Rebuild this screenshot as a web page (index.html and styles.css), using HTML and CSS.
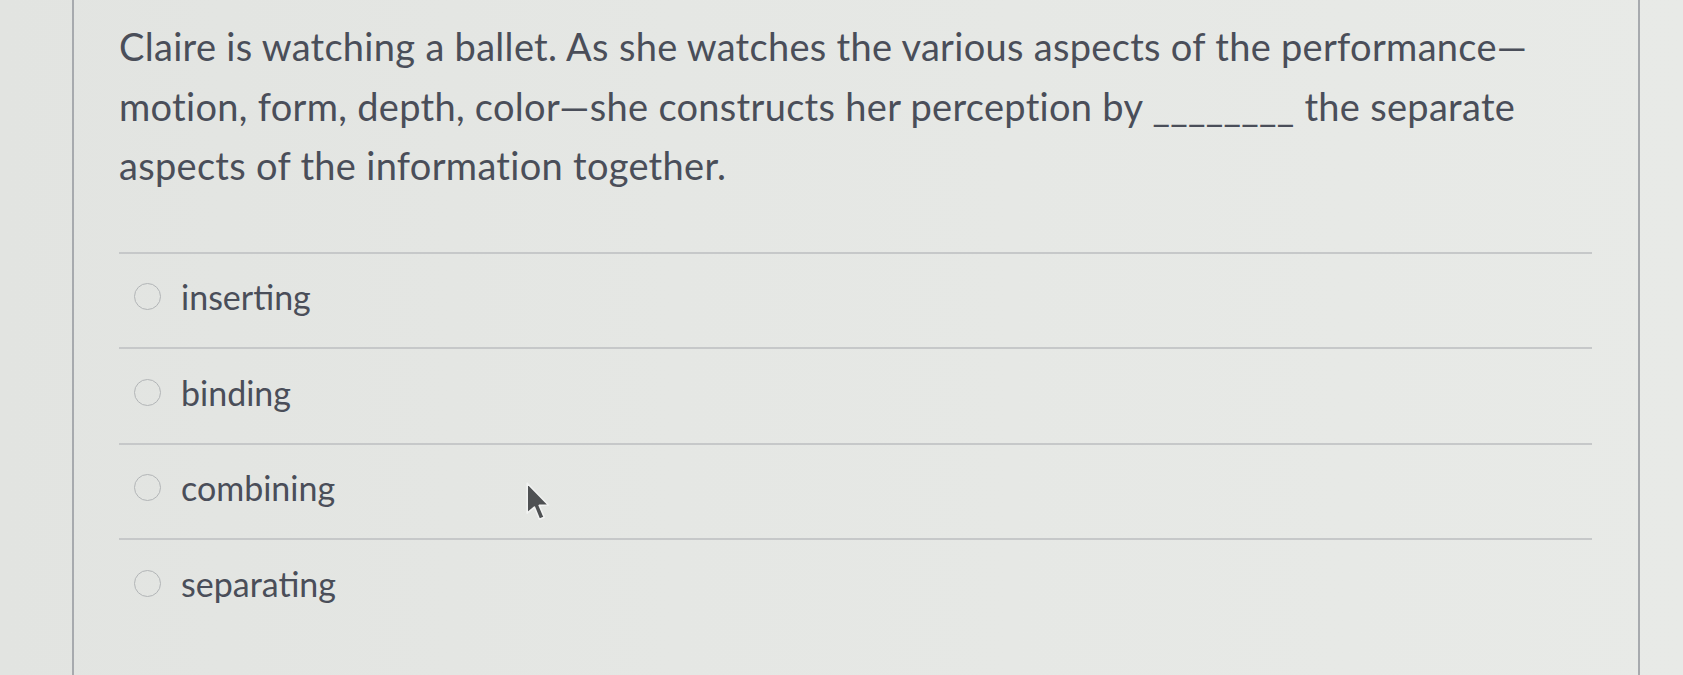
FILE: index.html
```html
<!DOCTYPE html>
<html lang="en">
<head>
<meta charset="utf-8">
<title>Quiz question</title>
<link rel="stylesheet" href="styles.css">
</head>
<body>
<div class="page">
  <div class="gutter"></div>
  <main class="panel">
    <div class="question">
      <p class="question-text">Claire is watching a ballet. As she watches the various aspects of the performance—motion, form, depth, color—she constructs her perception by ________ the separate aspects of the information together.</p>
    </div>
    <div class="answers">
      <label class="answer"><span class="radio"></span><span class="answer-text">inserting</span></label>
      <label class="answer"><span class="radio"></span><span class="answer-text">binding</span></label>
      <label class="answer"><span class="radio"></span><span class="answer-text">combining</span></label>
      <label class="answer"><span class="radio"></span><span class="answer-text">separating</span></label>
    </div>
  </main>
  <div class="gutter-right"></div>
  <svg class="cursor" width="24" height="40" viewBox="0 0 12 20" aria-hidden="true">
    <path d="M0.6 0.6 L0.6 15.6 L4.2 12.5 L6.7 18.6 L9.1 17.6 L6.6 11.7 L11.2 11.5 Z" fill="#4f5153" stroke="#f2f3f2" stroke-width="0.8" stroke-linejoin="round"/>
  </svg>
</div>
</body>
</html>
```

FILE: styles.css
```css
html, body {
  margin: 0;
  padding: 0;
}

body {
  background: #e4e6e3;
  font-family: Lato, "Open Sans", sans-serif;
  color: #4a4e59;
  overflow: hidden;
}

.page {
  position: relative;
  display: flex;
  height: 675px;
  background: linear-gradient(90deg, #e2e4e1 0%, #e5e7e4 40%, #e7e9e6 80%, #e8eae7 100%);
}

.gutter {
  width: 72px;
  flex: none;
  border-right: 2px solid #a7aaae;
}

.panel {
  width: 1564px;
  flex: none;
  padding: 17px 46px 0 45px;
  box-sizing: border-box;
}

.gutter-right {
  flex: 1;
  border-left: 2px solid #a7aaae;
}

.question-text {
  margin: 0;
  font-size: 38px;
  line-height: 59.5px;
  letter-spacing: 0.3px;
}

.answers {
  margin-top: 56px;
}

.answer {
  display: flex;
  align-items: center;
  height: 93.5px;
  border-top: 2px solid #c6c8c9;
}

.radio {
  width: 25px;
  height: 25px;
  margin-left: 15px;
  margin-top: -7px;
  border: 1.5px solid #b2b5b7;
  border-radius: 50%;
  flex: none;
}

.answer-text {
  margin-left: 20px;
  font-size: 34px;
  line-height: 44px;
  margin-top: -6px;
}

.cursor {
  position: absolute;
  left: 526px;
  top: 482px;
}
```
